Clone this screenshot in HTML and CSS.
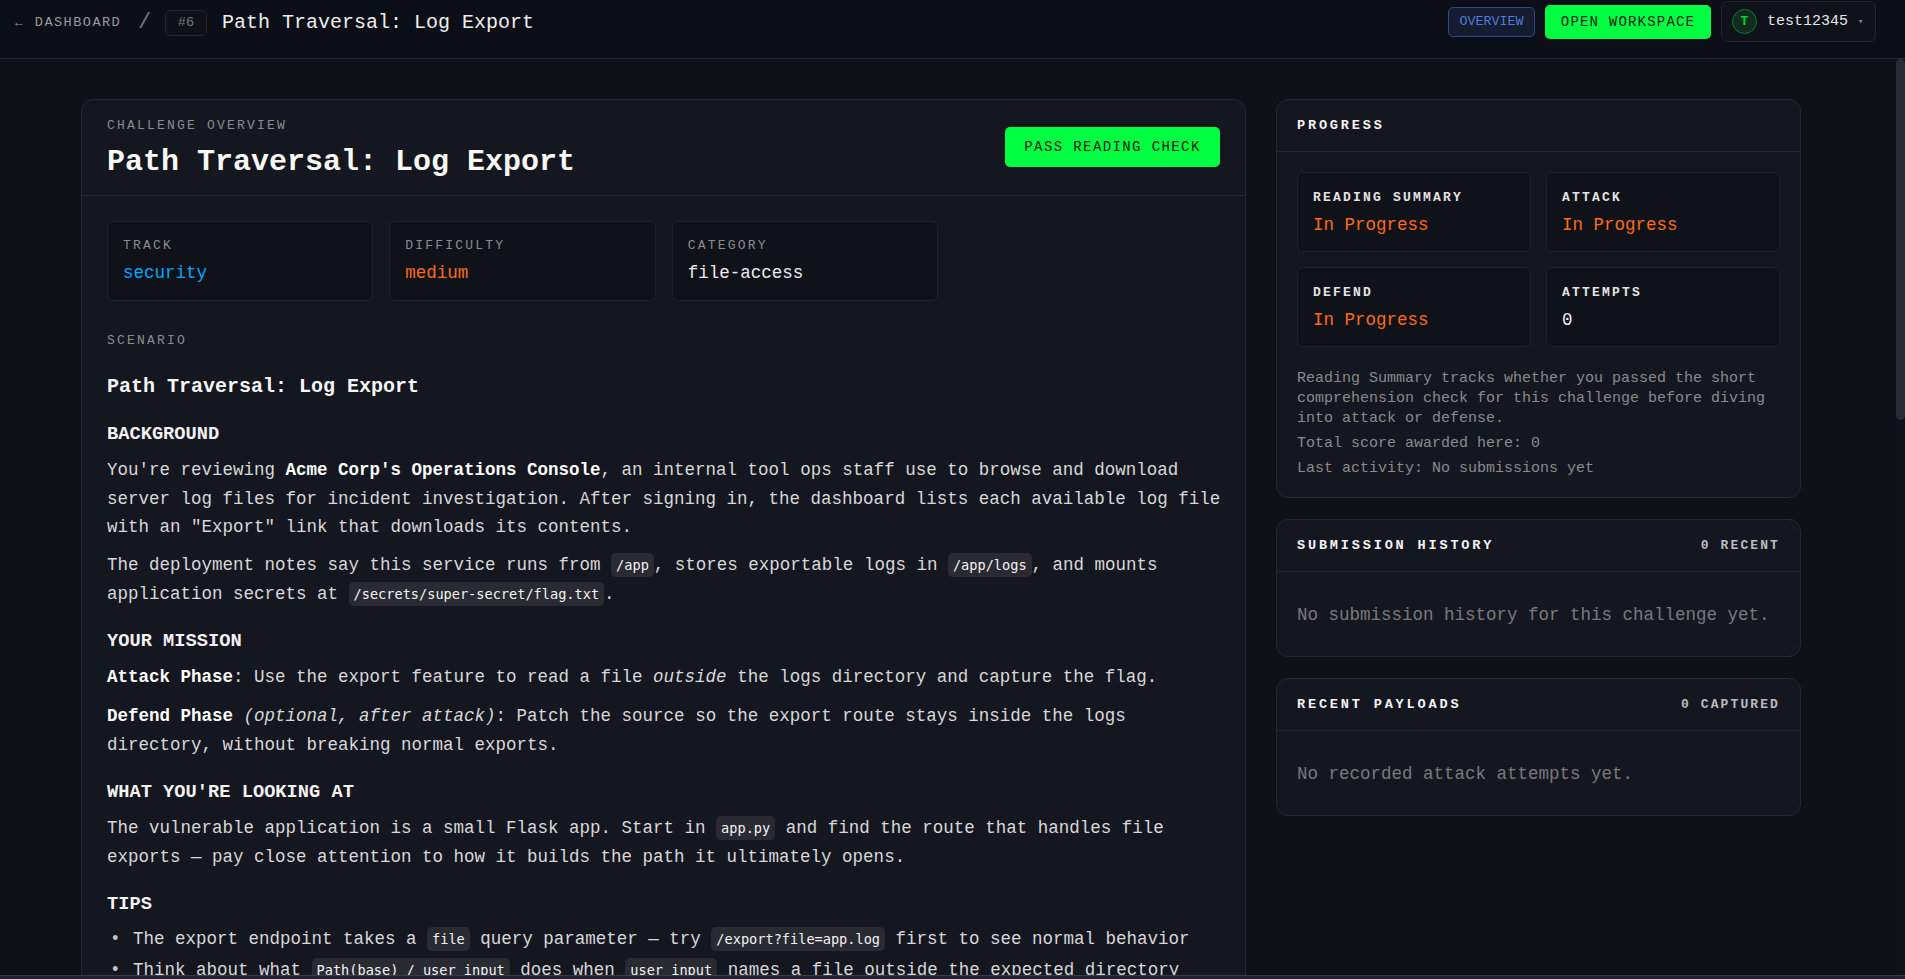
FILE: index.html
```html
<!DOCTYPE html>
<html lang="en">
<head>
<meta charset="utf-8">
<title>Path Traversal: Log Export</title>
<link rel="stylesheet" href="styles.css">
</head>
<body>
<div class="app">
  <header class="topbar">
    <div class="crumbs">
      <a class="back"><span class="arrow">←</span> DASHBOARD</a>
      <span class="slash">/</span>
      <span class="num">#6</span>
      <span class="top-title">Path Traversal: Log Export</span>
    </div>
    <div class="actions">
      <a class="btn-overview">OVERVIEW</a>
      <a class="btn-primary btn-top">OPEN WORKSPACE</a>
      <div class="user">
        <span class="avatar">T</span>
        <span class="user-name">test12345</span>
        <span class="caret">▾</span>
      </div>
    </div>
  </header>
  <div class="workspace">
    <main class="scroller">
      <div class="layout">
        <section class="panel main-panel">
          <div class="main-head">
            <div>
              <div class="label">CHALLENGE OVERVIEW</div>
              <h1 class="title">Path Traversal: Log Export</h1>
            </div>
            <a class="btn-primary btn-pass">PASS READING CHECK</a>
          </div>
          <div class="main-body">
            <div class="meta-grid">
              <div class="card"><div class="label">TRACK</div><div class="value blue">security</div></div>
              <div class="card"><div class="label">DIFFICULTY</div><div class="value orange">medium</div></div>
              <div class="card"><div class="label">CATEGORY</div><div class="value">file-access</div></div>
            </div>
            <div class="label scenario">SCENARIO</div>
            <article class="prose">
              <h2>Path Traversal: Log Export</h2>
              <h3>BACKGROUND</h3>
              <p>You're reviewing <strong>Acme Corp's Operations Console</strong>, an internal tool ops staff use to browse and download server log files for incident investigation. After signing in, the dashboard lists each available log file with an "Export" link that downloads its contents.</p>
              <p>The deployment notes say this service runs from <code>/app</code>, stores exportable logs in <code>/app/logs</code>, and mounts application secrets at <code>/secrets/super-secret/flag.txt</code>.</p>
              <h3>YOUR MISSION</h3>
              <p class="phase"><strong>Attack Phase</strong>: Use the export feature to read a file <em>outside</em> the logs directory and capture the flag.</p>
              <p><strong>Defend Phase</strong> <em>(optional, after attack)</em>: Patch the source so the export route stays inside the logs directory, without breaking normal exports.</p>
              <h3>WHAT YOU'RE LOOKING AT</h3>
              <p>The vulnerable application is a small Flask app. Start in <code>app.py</code> and find the route that handles file exports — pay close attention to how it builds the path it ultimately opens.</p>
              <h3>TIPS</h3>
              <ul>
                <li>The export endpoint takes a <code>file</code> query parameter — try <code>/export?file=app.log</code> first to see normal behavior</li>
                <li>Think about what <code>Path(base) / user_input</code> does when <code>user_input</code> names a file outside the expected directory</li>
              </ul>
            </article>
          </div>
        </section>
        <aside class="side">
          <section class="panel">
            <div class="side-head"><span class="side-title">PROGRESS</span></div>
            <div class="side-body">
              <div class="progress-grid">
                <div class="card"><div class="label strong">READING SUMMARY</div><div class="value orange">In Progress</div></div>
                <div class="card"><div class="label strong">ATTACK</div><div class="value orange">In Progress</div></div>
                <div class="card"><div class="label strong">DEFEND</div><div class="value orange">In Progress</div></div>
                <div class="card"><div class="label strong">ATTEMPTS</div><div class="value">0</div></div>
              </div>
              <p class="note first">Reading Summary tracks whether you passed the short comprehension check for this challenge before diving into attack or defense.</p>
              <p class="note">Total score awarded here: 0</p>
              <p class="note">Last activity: No submissions yet</p>
            </div>
          </section>
          <section class="panel">
            <div class="side-head"><span class="side-title">SUBMISSION HISTORY</span><span class="side-meta">0 RECENT</span></div>
            <p class="empty">No submission history for this challenge yet.</p>
          </section>
          <section class="panel">
            <div class="side-head"><span class="side-title">RECENT PAYLOADS</span><span class="side-meta">0 CAPTURED</span></div>
            <p class="empty">No recorded attack attempts yet.</p>
          </section>
        </aside>
      </div>
    </main>
    <div class="rail"><div class="thumb"></div></div>
  </div>
  <div class="bottom-edge"></div>
</div>
</body>
</html>
```
FILE: styles.css
```css
* { box-sizing: border-box; }
html, body { height: 100%; margin: 0; }
body {
  background: #0f1117;
  color: #d8d8d8;
  font-family: "Liberation Mono", "DejaVu Sans Mono", monospace;
  font-size: 17.5px;
  overflow: hidden;
}
.app { height: 100vh; display: flex; flex-direction: column; }

/* top bar */
.topbar {
  height: 59px;
  flex: none;
  background: #0d0f18;
  border-bottom: 1px solid #262830;
  display: flex;
  justify-content: space-between;
  align-items: flex-start;
  padding: 1px 29px 0 15px;
}
.crumbs { display: flex; align-items: center; height: 43px; }
.back { color: #9a9a9a; font-size: 13.6px; letter-spacing: 1.44px; width: 123px; white-space: nowrap; }
.arrow { font-size: 12px; letter-spacing: 0; margin-right: 3px; }
.slash { color: #777; font-size: 22px; width: 27px; }
.num {
  width: 42px; height: 26px;
  display: flex; align-items: center; justify-content: center;
  border: 1px solid #24262e; border-radius: 5px;
  background: #0f1118; color: #777; font-size: 13.6px;
  margin-right: 15px;
}
.top-title { font-size: 20px; color: #eee; }
.actions { display: flex; align-items: center; height: 41px; }
.btn-overview {
  height: 30px; width: 87px; margin-right: 10px;
  display: flex; align-items: center; justify-content: center;
  border: 1px solid #2f4a8a; border-radius: 5px;
  background: #141c30; color: #507bd8; font-size: 13.33px;
}
.btn-primary {
  display: flex; align-items: center; justify-content: center;
  background: #00ff41; color: #08200f; border-radius: 5px;
  font-size: 14px; white-space: nowrap;
}
.btn-top { width: 166px; height: 34px; margin-right: 10px; letter-spacing: 1.2px; }
.user {
  width: 155px; height: 41px;
  display: flex; align-items: center;
  padding-left: 10px;
  border: 1px solid #22242c; border-radius: 6px; background: #10121a;
}
.avatar {
  width: 25px; height: 25px; border-radius: 50%;
  display: flex; align-items: center; justify-content: center;
  background: #0f2c1c; border: 1px solid #0f7a30; color: #00d23a;
  font-size: 13px; font-weight: 700;
  margin-right: 10px;
}
.user-name { font-size: 15px; color: #e6e6e6; margin-right: 10px; }
.caret { font-size: 9px; color: #888; }

/* scroll area */
.workspace { flex: 1; min-height: 0; display: flex; }
.scroller { flex: 1; min-width: 0; overflow: hidden; padding: 40px 0 0 81px; }
.rail { flex: none; width: 9px; background: #10121a; }
.thumb { height: 361px; background: #2a2b38; border-radius: 5px; }
.layout {
  display: grid;
  grid-template-columns: 1165px 525px;
  gap: 30px;
  align-items: start;
}

/* panels */
.panel { background: #151720; border: 1px solid #26282f; border-radius: 12px; }
.main-panel { min-height: 2240px; }
.main-head {
  height: 96px;
  display: flex; justify-content: space-between; align-items: flex-start;
  padding: 18px 25px 0;
  border-bottom: 1px solid #26282f;
}
.label { font-size: 13px; letter-spacing: 2.2px; line-height: 16px; color: #8c8c8c; }
.label.strong { font-weight: 700; color: #e4e4e4; }
.title { margin: 8px 0 0; font-size: 30px; line-height: 40px; font-weight: 700; color: #f8f8f4; }
.btn-pass { width: 215px; height: 40px; margin-top: 9px; letter-spacing: 1.4px; }
.main-body { padding: 25px 24px 0 25px; }
.meta-grid { display: grid; grid-template-columns: repeat(3, 1fr); gap: 16px; width: 831px; }
.card {
  background: #10121a; border: 1px solid #20222a; border-radius: 6px;
  padding: 16px 15px 0; height: 80px;
}
.value { margin-top: 6px; line-height: 26px; color: #ececec; }
.blue { color: #00a8ff; }
.orange { color: #ff6a13; }
.scenario { margin-top: 32px; }

/* prose */
.prose { line-height: 28.5px; }
.prose h2 { margin: 23px 0 0; font-size: 20px; line-height: 30px; font-weight: 700; color: #f6f6f6; }
.prose h3 { margin: 18px 0 7px; font-size: 18.72px; line-height: 30px; font-weight: 700; color: #f2f2f2; }
.prose h2 + h3 { margin-top: 17px; }
.prose p { margin: 0 0 9.5px; }
.prose p.phase { margin-bottom: 10.5px; }
.prose strong { color: #fff; font-weight: 700; }
.prose code {
  font-size: 13.6px; padding: 4px 5px; border-radius: 5px;
  background: #2a2b32; color: #f4f4f4;
}
.prose ul { margin: -1px 0 0; padding-left: 26px; list-style: none; }
.prose li { margin-bottom: 2.5px; }
.prose li::before {
  content: "•";
  display: inline-block;
  width: 23px;
  margin-left: -23px;
  color: #c4c4c4;
}

/* side column */
.side { display: flex; flex-direction: column; gap: 21px; }
.side-head {
  height: 52px;
  display: flex; justify-content: space-between; align-items: center;
  padding: 0 20px;
  border-bottom: 1px solid #26282f;
}
.side-title { font-size: 13.6px; font-weight: 700; letter-spacing: 2.8px; color: #f4f4f4; }
.side-meta { font-size: 13px; font-weight: 700; letter-spacing: 2.1px; color: #bcbcbc; }
.side-body { padding: 20px 20px 18px; }
.progress-grid { display: grid; grid-template-columns: 234px 234px; gap: 15px; }
.progress-grid .card { padding-top: 17px; }
.note { margin: 5px 0 0; font-size: 15px; line-height: 20px; color: #8a8a8a; }
.note.first { margin-top: 22px; }
.empty { margin: 0; padding: 30px 20px 27px; line-height: 27px; color: #7a7a7a; }

.bottom-edge { height: 4px; flex: none; background: #1b2036; border-top: 1px solid #3a3c44; }
```
